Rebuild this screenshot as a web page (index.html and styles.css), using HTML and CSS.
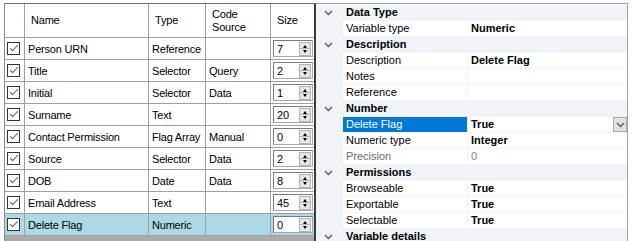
FILE: index.html
```html
<!DOCTYPE html>
<html lang="en">
<head>
  <meta charset="UTF-8" />
  <title>Variables</title>
  <link rel="stylesheet" href="styles.css">
</head>
<body>
  <div class="app">
    <div class="grid-panel">
      <div class="row head">
        <div class="cell check"></div>
        <div class="cell">Name</div>
        <div class="cell">Type</div>
        <div class="cell">Code Source</div>
        <div class="cell last">Size</div>
      </div>
      <div class="row">
        <div class="cell check"><span class="checkbox"></span></div>
        <div class="cell">Person URN</div>
        <div class="cell">Reference</div>
        <div class="cell"></div>
        <div class="cell last size"><div class="spinner"><span class="num">7</span><span class="spin"><span class="up"></span><span class="down"></span></span></div></div>
      </div>
      <div class="row">
        <div class="cell check"><span class="checkbox"></span></div>
        <div class="cell">Title</div>
        <div class="cell">Selector</div>
        <div class="cell">Query</div>
        <div class="cell last size"><div class="spinner"><span class="num">2</span><span class="spin"><span class="up"></span><span class="down"></span></span></div></div>
      </div>
      <div class="row">
        <div class="cell check"><span class="checkbox"></span></div>
        <div class="cell">Initial</div>
        <div class="cell">Selector</div>
        <div class="cell">Data</div>
        <div class="cell last size"><div class="spinner"><span class="num">1</span><span class="spin"><span class="up"></span><span class="down"></span></span></div></div>
      </div>
      <div class="row">
        <div class="cell check"><span class="checkbox"></span></div>
        <div class="cell">Surname</div>
        <div class="cell">Text</div>
        <div class="cell"></div>
        <div class="cell last size"><div class="spinner"><span class="num">20</span><span class="spin"><span class="up"></span><span class="down"></span></span></div></div>
      </div>
      <div class="row">
        <div class="cell check"><span class="checkbox"></span></div>
        <div class="cell">Contact Permission</div>
        <div class="cell">Flag Array</div>
        <div class="cell">Manual</div>
        <div class="cell last size"><div class="spinner"><span class="num">0</span><span class="spin"><span class="up"></span><span class="down"></span></span></div></div>
      </div>
      <div class="row">
        <div class="cell check"><span class="checkbox"></span></div>
        <div class="cell">Source</div>
        <div class="cell">Selector</div>
        <div class="cell">Data</div>
        <div class="cell last size"><div class="spinner"><span class="num">2</span><span class="spin"><span class="up"></span><span class="down"></span></span></div></div>
      </div>
      <div class="row">
        <div class="cell check"><span class="checkbox"></span></div>
        <div class="cell">DOB</div>
        <div class="cell">Date</div>
        <div class="cell">Data</div>
        <div class="cell last size"><div class="spinner"><span class="num">8</span><span class="spin"><span class="up"></span><span class="down"></span></span></div></div>
      </div>
      <div class="row">
        <div class="cell check"><span class="checkbox"></span></div>
        <div class="cell">Email Address</div>
        <div class="cell">Text</div>
        <div class="cell"></div>
        <div class="cell last size"><div class="spinner"><span class="num">45</span><span class="spin"><span class="up"></span><span class="down"></span></span></div></div>
      </div>
      <div class="row selected">
        <div class="cell check"><span class="checkbox"></span></div>
        <div class="cell">Delete Flag</div>
        <div class="cell">Numeric</div>
        <div class="cell"></div>
        <div class="cell last size"><div class="spinner"><span class="num">0</span><span class="spin"><span class="up"></span><span class="down"></span></span></div></div>
      </div>
    </div>

    <div class="props">
      <div class="cat">
        <span class="gutter"><svg width="9" height="6" viewBox="0 0 9 6"><polyline points="1,1 4.5,4.5 8,1" /></svg></span>
        <span class="label">Data Type</span>
      </div>
      <div class="prop">
        <span class="gutter"></span><span class="name">Variable type</span><span class="value">Numeric</span>
      </div>
      <div class="cat">
        <span class="gutter"><svg width="9" height="6" viewBox="0 0 9 6"><polyline points="1,1 4.5,4.5 8,1" /></svg></span>
        <span class="label">Description</span>
      </div>
      <div class="prop">
        <span class="gutter"></span><span class="name">Description</span><span class="value">Delete Flag</span>
      </div>
      <div class="prop">
        <span class="gutter"></span><span class="name">Notes</span><span class="value"></span>
      </div>
      <div class="prop">
        <span class="gutter"></span><span class="name">Reference</span><span class="value"></span>
      </div>
      <div class="cat">
        <span class="gutter"><svg width="9" height="6" viewBox="0 0 9 6"><polyline points="1,1 4.5,4.5 8,1" /></svg></span>
        <span class="label">Number</span>
      </div>
      <div class="prop selected">
        <span class="gutter"></span><span class="name">Delete Flag</span>
        <span class="value">True
          <span class="dropdown"><svg width="9" height="6" viewBox="0 0 9 6"><polyline points="1,1 4.5,4.5 8,1" /></svg></span>
        </span>
      </div>
      <div class="prop">
        <span class="gutter"></span><span class="name">Numeric type</span><span class="value">Integer</span>
      </div>
      <div class="prop disabled">
        <span class="gutter"></span><span class="name">Precision</span><span class="value">0</span>
      </div>
      <div class="cat">
        <span class="gutter"><svg width="9" height="6" viewBox="0 0 9 6"><polyline points="1,1 4.5,4.5 8,1" /></svg></span>
        <span class="label">Permissions</span>
      </div>
      <div class="prop">
        <span class="gutter"></span><span class="name">Browseable</span><span class="value">True</span>
      </div>
      <div class="prop">
        <span class="gutter"></span><span class="name">Exportable</span><span class="value">True</span>
      </div>
      <div class="prop">
        <span class="gutter"></span><span class="name">Selectable</span><span class="value">True</span>
      </div>
      <div class="cat">
        <span class="gutter"><svg width="9" height="6" viewBox="0 0 9 6"><polyline points="1,1 4.5,4.5 8,1" /></svg></span>
        <span class="label">Variable details</span>
      </div>
    </div>
  </div>
</body>
</html>
```

FILE: styles.css
```css
* {
  box-sizing: border-box;
}
body {
  margin: 0;
  font-family: "Liberation Sans", Arial, sans-serif;
  font-size: 11px;
  color: #000;
  background: #fff;
  overflow: hidden;
}
.app {
  display: flex;
  height: 241px;
  padding-top: 3px;
}

/* left data grid */
.grid-panel {
  margin-left: 4px;
  width: 312px;
  border-left: 1px solid #8c8c8c;
  border-top: 1px solid #6e6e6e;
  border-right: 2px solid #3c3c3c;
  background: #ababab;
}
.row {
  display: grid;
  grid-template-columns: 20px 124px 57px 65px 1fr;
  height: 22px;
  background: #fff;
}
.row.selected {
  background: #add8e6;
}
.cell {
  display: flex;
  align-items: center;
  padding: 0 3px;
  border-right: 1px solid #a0a0a0;
  border-bottom: 1px solid #a0a0a0;
  white-space: nowrap;
  overflow: hidden;
  letter-spacing: -0.2px;
}
.cell.last {
  border-right: none;
}
.row.head {
  height: 34px;
}
.head .cell {
  padding: 0 6px;
  white-space: normal;
  line-height: 13px;
}
.cell.check {
  padding: 0 0 0 2px;
}
.checkbox {
  position: relative;
  width: 13px;
  height: 13px;
  border: 1px solid #333;
  background: #fff;
}
.checkbox::after {
  content: "";
  position: absolute;
  left: 2px;
  top: 2px;
  width: 7px;
  height: 3px;
  border-left: 1.5px solid #555;
  border-bottom: 1.5px solid #555;
  transform: rotate(-45deg);
}
.cell.size {
  padding: 0 0 0 2px;
}
.spinner {
  display: flex;
  justify-content: space-between;
  align-items: center;
  width: 40px;
  height: 17px;
  border: 1px solid #a8a8a8;
  border-top-color: #7a7a7a;
  border-left-color: #7a7a7a;
  background: #fff;
  padding: 0 1px 0 3px;
}
.spin {
  display: flex;
  flex-direction: column;
  width: 12px;
  height: 14px;
}
.spin span {
  position: relative;
  flex: 1;
  background: #e6e6e6;
  border: 1px solid #b4b4b4;
}
.spin .down {
  border-top: none;
}
.spin span::after {
  content: "";
  position: absolute;
  left: 3px;
  top: 2px;
  border-left: 2.5px solid transparent;
  border-right: 2.5px solid transparent;
}
.spin .up::after {
  border-bottom: 3px solid #000;
}
.spin .down::after {
  top: 1px;
  border-top: 3px solid #000;
}

/* right property grid */
.props {
  width: 312px;
  border-top: 1px solid #a0a0a0;
  border-right: 1px solid #a0a0a0;
  padding-top: 1px;
  background: #fff;
}
.prop,
.cat {
  display: grid;
  grid-template-columns: 27px 125px 1fr;
  height: 16px;
  line-height: 15px;
  border-bottom: 1px solid #f0f3f8;
}
.gutter {
  display: flex;
  align-items: center;
  justify-content: center;
  background: #f0f3f8;
  padding-right: 3px;
}
.gutter svg,
.dropdown svg {
  fill: none;
  stroke: #5a5a5a;
  stroke-width: 1.4;
}
.cat {
  background: #f0f3f8;
  font-weight: bold;
}
.cat .label {
  padding-left: 3px;
  white-space: nowrap;
}
.prop .name {
  padding-left: 3px;
  border-right: 1px solid #f0f3f8;
}
.prop .value {
  display: flex;
  justify-content: space-between;
  padding-left: 3px;
  font-weight: bold;
}
.prop.selected .name {
  background: #0078d7;
  color: #fff;
}
.dropdown {
  display: flex;
  align-items: center;
  justify-content: center;
  width: 14px;
  height: 15px;
  background: #e1e1e1;
  border: 1px solid #adadad;
}
.prop.disabled .name {
  color: #6d6d6d;
}
.prop.disabled .value {
  color: #6d87b0;
  font-weight: normal;
}
```
